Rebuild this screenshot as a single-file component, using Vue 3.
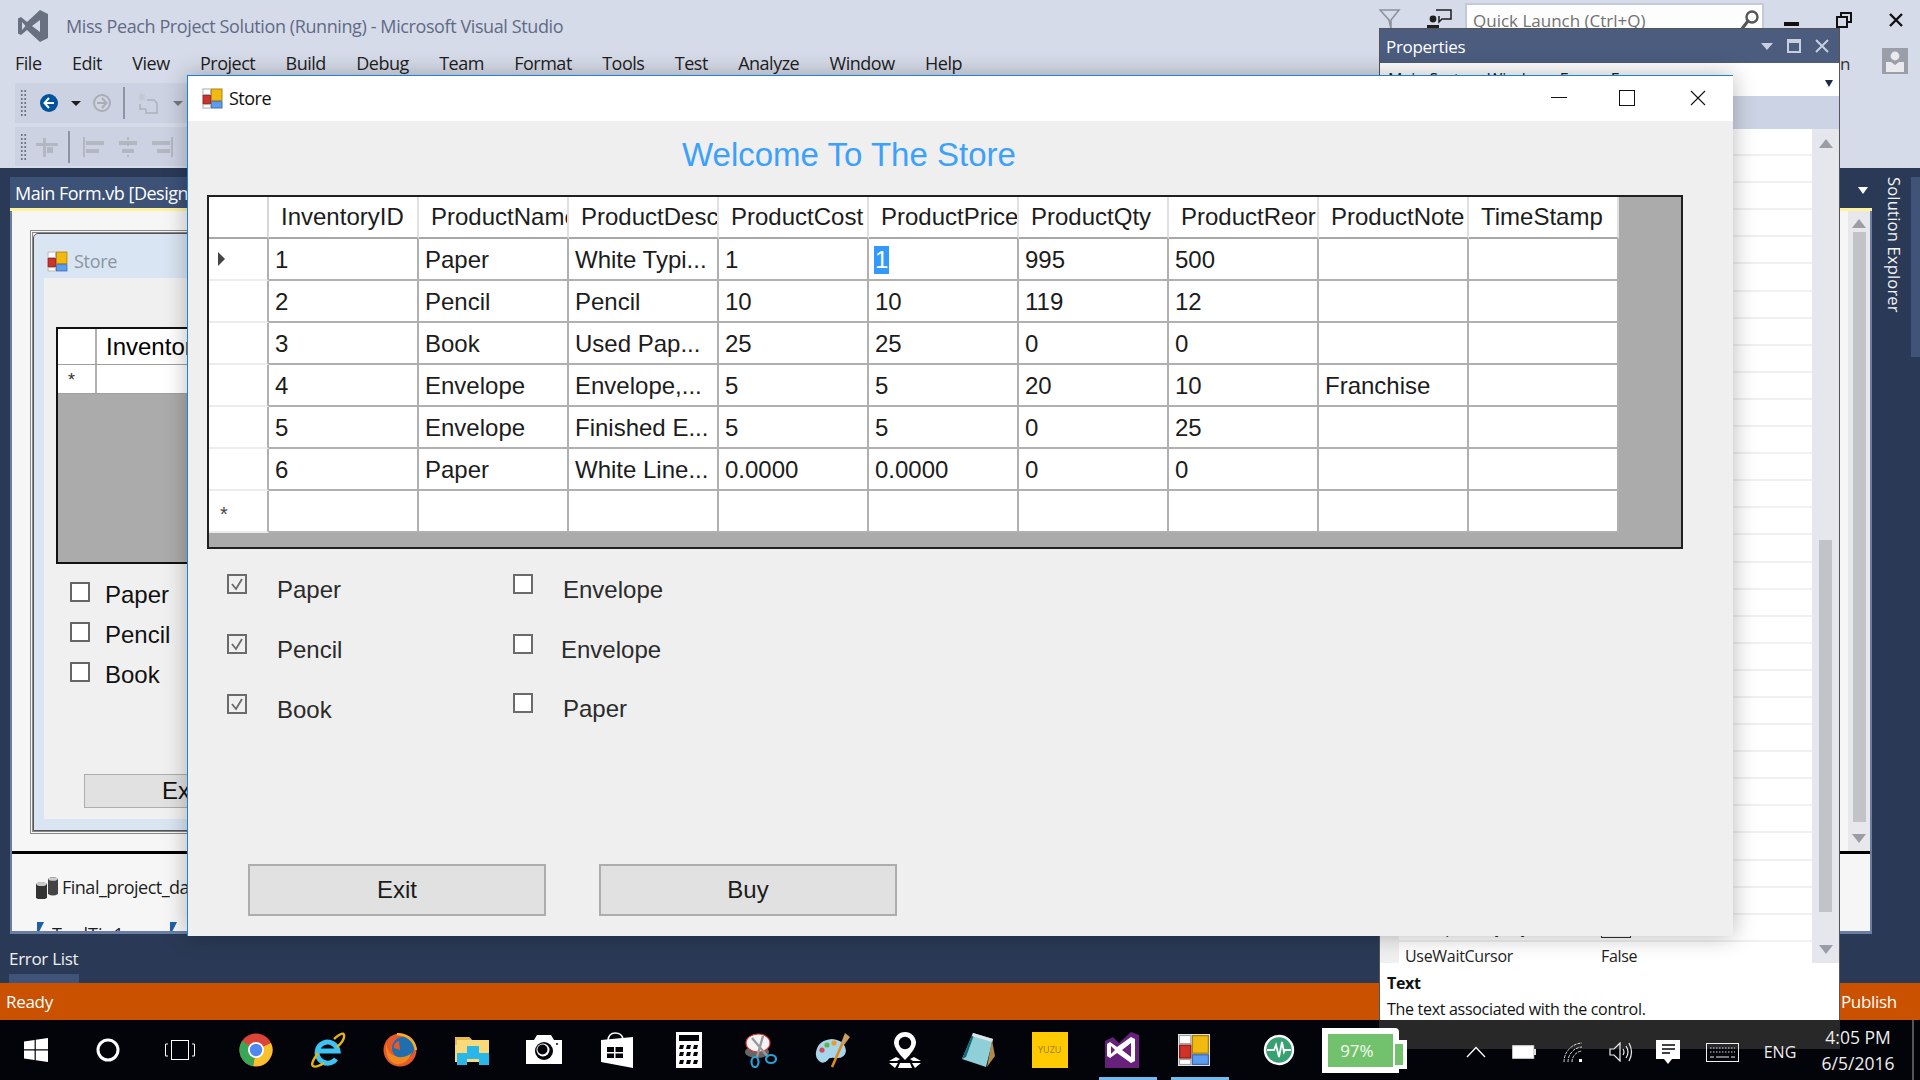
<template>
  <div class="desktop">
    <svg class="defs" width="0" height="0">
      <symbol id="formicon" viewBox="0 0 20 20">
        <rect x="0" y="0" width="20" height="20" fill="#e4e4e4" />
        <rect x="9" y="1" width="10" height="11" fill="#f2b90f" stroke="#a97f10" stroke-width=".8" />
        <rect x="1" y="7" width="7" height="8" fill="#d0322a" stroke="#8a1c18" stroke-width=".8" />
        <rect x="9" y="13" width="10" height="6" fill="#5d9cf0" stroke="#3a6cb4" stroke-width=".8" />
        <rect x="1" y="1" width="7" height="5" fill="#fff" stroke="#999" stroke-width=".6" />
        <rect x="1" y="16" width="7" height="3" fill="#fff" stroke="#999" stroke-width=".6" />
      </symbol>
    </svg>

    <!-- visual studio behind everything -->
    <div class="vs">
      <div class="vs-title">
        <svg class="vs-logo" width="32" height="32" viewBox="0 0 32 32">
          <path fill-rule="evenodd" fill="#68717f" d="M23 0 L31 4 V28 L23 32 L10 20 L4 25 L1 23.5 V8.5 L4 7 L10 12 Z M23 10 L15 16 L23 22 Z M5 12 V20 L8.5 16 Z" />
        </svg>
        <span class="vs-caption">Miss Peach Project Solution (Running) - Microsoft Visual Studio</span>
        <div class="vs-title-right">
          <svg width="22" height="22" viewBox="0 0 22 22" class="filter-ic">
            <path d="M1 2 H20 L12 12 V21 L10 12 Z" fill="none" stroke="#8d93a0" stroke-width="1.6" />
          </svg>
          <svg width="26" height="22" viewBox="0 0 26 22" class="talk-ic">
            <circle cx="6" cy="11" r="3.4" fill="#1e1e1e" />
            <path d="M0 22 V17 H12 V22 Z" fill="#1e1e1e" />
            <path d="M9 2 H24 V11 H15 L12 14 V8" fill="none" stroke="#1e1e1e" stroke-width="1.5" />
          </svg>
          <div class="quick">
            <span>Quick Launch (Ctrl+Q)</span>
            <svg width="22" height="22" viewBox="0 0 22 22">
              <circle cx="14" cy="8" r="5.5" fill="none" stroke="#555" stroke-width="2.4" />
              <path d="M10 12 L3 21" stroke="#555" stroke-width="3" />
            </svg>
          </div>
          <div class="win-min"></div>
          <svg class="win-restore" width="16" height="16" viewBox="0 0 16 16">
            <rect x="5" y="1" width="10" height="9" fill="none" stroke="#111" stroke-width="2" />
            <rect x="1" y="5" width="10" height="10" fill="#d6dbe9" stroke="#111" stroke-width="2" />
          </svg>
          <svg class="win-close" width="16" height="16" viewBox="0 0 16 16">
            <path d="M2 2 L14 14 M14 2 L2 14" stroke="#111" stroke-width="2.4" />
          </svg>
        </div>
      </div>
      <div class="menu-row">
        <div class="menu">
          <span v-for="m in menu" :key="m">{{ m }}</span>
        </div>
        <span class="cut-n">n</span>
        <div class="user-ic">
          <svg width="26" height="26" viewBox="0 0 26 26">
            <rect width="26" height="26" fill="#9a9ea8" />
            <circle cx="13" cy="8" r="4.4" fill="#e9e9ee" />
            <path d="M4 24 V14 H9 L13 17 L17 14 H22 V24 Z" fill="#e9e9ee" />
          </svg>
        </div>
      </div>
      <div class="toolbar tb1">
        <span class="grip"></span>
        <svg width="18" height="18" viewBox="0 0 18 18" class="t-back">
          <circle cx="9" cy="9" r="9" fill="#00539c" />
          <path d="M9 4 L4.5 9 L9 14 M5 9 H14" stroke="#fff" stroke-width="2" fill="none" />
        </svg>
        <span class="tri t-tri1"></span>
        <svg width="18" height="18" viewBox="0 0 18 18" class="t-fwd">
          <circle cx="9" cy="9" r="8" fill="#d0d4e0" stroke="#a9adb5" stroke-width="2" />
          <path d="M9 4 L13.5 9 L9 14 M4 9 H13" stroke="#a9adb5" stroke-width="2" fill="none" />
        </svg>
        <span class="sep t-sep"></span>
        <svg width="20" height="22" viewBox="0 0 20 22" class="t-new">
          <path d="M9 8 H16 L19 11 V21 H8 V17 M2 12 V17 H8" fill="none" stroke="#adb1ba" stroke-width="1.5" />
          <path d="M4 1 V9 M0 5 H8 M1 2 L7 8 M7 2 L1 8" stroke="#c4c7cf" stroke-width="1.2" />
        </svg>
        <span class="tri grey t-tri2"></span>
      </div>
      <div class="toolbar tb2">
        <span class="grip"></span>
        <svg width="22" height="22" viewBox="0 0 22 22" class="t2a">
          <path d="M0 7 H22 V10 H0 Z M7 2 H10 V21 H7 Z" fill="#b3b7c0" />
          <rect x="11" y="11" width="6" height="6" fill="#b3b7c0" />
        </svg>
        <span class="sep t2sep"></span>
        <svg width="22" height="20" viewBox="0 0 22 20" class="t2b">
          <path d="M1 0 V20" stroke="#b3b7c0" stroke-width="2" />
          <rect x="3" y="4" width="18" height="4" fill="#b3b7c0" />
          <rect x="3" y="12" width="13" height="4" fill="#b3b7c0" />
        </svg>
        <svg width="20" height="20" viewBox="0 0 20 20" class="t2c">
          <path d="M10 0 V20" stroke="#b3b7c0" stroke-width="2" stroke-dasharray="3 3" />
          <rect x="1" y="4" width="18" height="4" fill="#b3b7c0" />
          <rect x="4" y="12" width="12" height="4" fill="#b3b7c0" />
        </svg>
        <svg width="22" height="20" viewBox="0 0 22 20" class="t2d">
          <path d="M21 0 V20" stroke="#b3b7c0" stroke-width="2" />
          <rect x="1" y="4" width="18" height="4" fill="#b3b7c0" />
          <rect x="6" y="12" width="13" height="4" fill="#b3b7c0" />
        </svg>
      </div>

      <div class="vs-main">
        <div class="tab-row">
          <div class="tab">Main Form.vb [Design]</div>
          <span class="tri white tab-drop"></span>
        </div>
        <div class="doc">
          <div class="design-row">
            <div class="design">
              <div class="sel-box">
                <div class="d-form">
                  <div class="d-title">
                    <svg width="21" height="21"><use href="#formicon" /></svg>
                    <span>Store</span>
                  </div>
                  <div class="d-body">
                    <div class="d-grid">
                      <div class="d-head">
                        <div class="d-corner"></div>
                        <div class="d-col">InventoryID</div>
                      </div>
                      <div class="d-new">
                        <div class="d-corner small">*</div>
                        <div class="d-col"></div>
                      </div>
                    </div>
                    <div class="d-check" v-for="c in designChecks" :key="c">
                      <span class="d-box"></span>
                      <span>{{ c }}</span>
                    </div>
                    <div class="d-btn">Exit</div>
                  </div>
                </div>
              </div>
            </div>
            <div class="doc-scroll">
              <span class="tri up grey2"></span>
              <div class="doc-thumb"></div>
              <span class="tri grey2"></span>
            </div>
          </div>
          <div class="blackline"></div>
          <div class="tray">
            <div class="tray-item">
              <svg width="24" height="24" viewBox="0 0 24 24">
                <path d="M13 4 Q18 0 23 4 V19 Q18 22 13 19 Z" fill="#444" />
                <path d="M1 9 Q6 5 12 9 V23 Q6 26 1 23 Z" fill="#333" />
                <ellipse cx="6.5" cy="9" rx="5" ry="2" fill="#ccc" />
                <ellipse cx="18" cy="4" rx="4.6" ry="1.8" fill="#ccc" />
              </svg>
              <span>Final_project_dataset</span>
            </div>
            <div class="tray-second">
              <span class="mini-arrow"></span>
              <span class="cut-txt">ToolTip1</span>
              <span class="mini-arrow"></span>
            </div>
          </div>
        </div>
        <div class="error-tab">Error List</div>
        <span class="explorer">Solution Explorer</span>
        <span class="explorer-strip"></span>
      </div>

      <div class="status">
        <span>Ready</span>
        <span>Publish</span>
      </div>

      <div class="taskbar">
        <div class="ghost"></div>
        <div class="cell">
          <svg width="24" height="24" viewBox="0 0 24 24">
            <path d="M0 3.4 L10.6 2 V11.2 H0 Z M11.8 1.8 L24 0 V11.2 H11.8 Z M0 12.6 H10.6 V22 L0 20.6 Z M11.8 12.6 H24 V24 L11.8 22.2 Z" fill="#fff" />
          </svg>
        </div>
        <div class="cell">
          <svg width="24" height="24" viewBox="0 0 24 24">
            <circle cx="12" cy="12" r="10" fill="none" stroke="#fff" stroke-width="3" />
          </svg>
        </div>
        <div class="cell">
          <svg width="30" height="20" viewBox="0 0 30 20">
            <rect x="6.5" y=".5" width="17" height="19" fill="none" stroke="#fff" />
            <path d="M3 4 H.5 V16 H3 M27 4 H29.5 V16 H27" fill="none" stroke="#fff" />
          </svg>
        </div>
        <div class="cell chrome">
          <svg width="34" height="34" viewBox="0 0 34 34">
            <circle cx="17" cy="17" r="16.5" fill="#db4437" />
            <path d="M17 17 L32 10 A16.5 16.5 0 0 1 14 33 Z" fill="#fbc02d" />
            <path d="M17 17 L14 33.2 A16.5 16.5 0 0 1 3 8 Z" fill="#3aa757" />
            <circle cx="17" cy="17" r="8" fill="#fff" />
            <circle cx="17" cy="17" r="6.2" fill="#4f88f0" />
          </svg>
        </div>
        <div class="cell">
          <svg width="36" height="36" viewBox="0 0 36 36">
            <path d="M7 19 H28 A10.5 10.5 0 1 0 26 27" fill="none" stroke="#3fc3f2" stroke-width="5" />
            <path d="M24 7 Q33 -1 34 3 Q35 8 27 15 M8 21 Q0 32 3 34 Q6 36 14 31" fill="none" stroke="#e8b40f" stroke-width="2.4" />
          </svg>
        </div>
        <div class="cell">
          <svg width="34" height="34" viewBox="0 0 34 34">
            <circle cx="17" cy="17" r="16.5" fill="#e8592a" />
            <circle cx="20" cy="15" r="11" fill="#1f6fb0" />
            <path d="M14 1 Q30 2 33 17" fill="none" stroke="#f1b420" stroke-width="2.5" />
            <path d="M3 10 Q4 22 15 24 Q25 25 29 19 Q24 33 13 31 Q2 28 3 10 Z" fill="#f08a1f" />
            <path d="M16 8 Q10 10 11 15 L17 17 Z" fill="#e8592a" />
          </svg>
        </div>
        <div class="cell">
          <svg width="34" height="30" viewBox="0 0 34 30">
            <path d="M0 2 H14 L17 5 H34 V27 H0 Z" fill="#f9d97a" />
            <path d="M0 2 H14 L17 5 H2 V10 H0 Z" fill="#e6bb50" />
            <path d="M2 30 V18 H12 V11 H24 V18 H34 V30 H24 V24 H12 V30 Z" fill="#29b6e8" />
          </svg>
        </div>
        <div class="cell">
          <svg width="36" height="30" viewBox="0 0 36 30">
            <path d="M0 5 H8 L11 0 H25 L28 5 H36 V29 H0 Z" fill="#fff" />
            <circle cx="18" cy="16" r="9" fill="#020409" />
            <circle cx="17" cy="15" r="6.5" fill="#fff" />
            <circle cx="16.5" cy="14.5" r="5" fill="#020409" />
            <circle cx="31" cy="9" r="1" fill="#020409" />
          </svg>
        </div>
        <div class="cell">
          <svg width="32" height="36" viewBox="0 0 32 36">
            <path d="M0 8 L32 5 V36 L0 30 Z" fill="#fff" />
            <path d="M7 8 Q8 1 14 1 Q21 1 22 7" fill="none" stroke="#fff" stroke-width="1.6" />
            <path d="M6 15 H13 V20 H6 Z M14.5 15 H22 V20 H14.5 Z M6 21.5 H13 V26 H6 Z M14.5 21.5 H22 V26 H14.5 Z" fill="#020409" />
          </svg>
        </div>
        <div class="cell">
          <svg width="26" height="36" viewBox="0 0 26 36">
            <rect width="26" height="36" fill="#fff" />
            <rect x="3" y="3" width="20" height="6" fill="#020409" />
            <g fill="#020409">
              <path d="M4 13 H8 L7 17 H3 Z M11 13 H15 L14 17 H10 Z M18 13 H22 L21 17 H17 Z" />
              <path d="M4 20 H8 L7 24 H3 Z M11 20 H15 L14 24 H10 Z M18 20 H22 L21 24 H17 Z" />
              <path d="M4 28 H8 L7 32 H3 Z M11 28 H15 L14 32 H10 Z M18 28 H22 L21 32 H17 Z" />
            </g>
          </svg>
        </div>
        <div class="cell">
          <svg width="34" height="36" viewBox="0 0 34 36">
            <ellipse cx="13" cy="20" rx="12" ry="6" fill="#666" />
            <ellipse cx="14" cy="11" rx="12" ry="9" fill="#f4f4f4" stroke="#d33" stroke-width="1.2" />
            <path d="M8 6 L24 25 M19 4 L13 25" stroke="#999" stroke-width="2.4" />
            <ellipse cx="11" cy="30" rx="3.5" ry="5" fill="none" stroke="#2a9fd8" stroke-width="2.2" />
            <ellipse cx="27" cy="27" rx="5" ry="4" fill="none" stroke="#2a9fd8" stroke-width="2.2" />
          </svg>
        </div>
        <div class="cell">
          <svg width="36" height="36" viewBox="0 0 36 36">
            <path d="M1 20 Q3 8 17 7 Q30 8 31 19 Q30 27 20 26 Q14 25 13 28 Q8 33 4 29 Q0 25 1 20 Z" fill="#a7d5ea" />
            <circle cx="7" cy="18" r="2.6" fill="#d04a5a" />
            <circle cx="12" cy="13" r="2.6" fill="#61b446" />
            <circle cx="19" cy="11" r="2.6" fill="#ee9b2c" />
            <path d="M17 35 L28 10" stroke="#e08a1e" stroke-width="2.6" />
            <path d="M26 11 L30 1 L35 5 L29 13 Z" fill="#c9a060" />
          </svg>
        </div>
        <div class="cell">
          <svg width="32" height="36" viewBox="0 0 32 36">
            <path d="M16 0 A11 11 0 0 1 27 11 Q27 17 16 28 Q5 17 5 11 A11 11 0 0 1 16 0 Z" fill="#fff" />
            <circle cx="16" cy="11" r="6.2" fill="#020409" />
            <path d="M7 25 L0 29 H8 L11 27 Z M25 25 L32 29 H24 L21 27 Z M0 31 H9 L6 36 Z M32 31 H23 L26 36 Z M11 31 H21 L23 36 H9 Z" fill="#fff" />
          </svg>
        </div>
        <div class="cell">
          <svg width="34" height="36" viewBox="0 0 34 36">
            <path d="M12 1 L32 7 L25 35 L1 27 Z" fill="#8fd0d8" />
            <path d="M1 27 L11 3 L13 3 L5 25 Z" fill="#0f6b7a" />
            <path d="M12 1 L32 7 L31 10 L11 4 Z" fill="#dfe5e6" />
            <path d="M31 8 L34 24 L26 35 Z" fill="#b08a4c" />
          </svg>
        </div>
        <div class="cell">
          <div class="yuzu">YUZU</div>
        </div>
        <div class="cell active">
          <svg width="34" height="36" viewBox="0 0 34 36">
            <path d="M0 9 L8 5 L14 11 L26 0 L34 3 V36 H0 Z" fill="#68217a" />
            <path fill-rule="evenodd" fill="#fff" d="M26 5 L30 7 V29 L26 31 L12 21 L5 26 L2 24 V12 L5 10 L12 15 Z M26 11 L17 18 L26 25 Z M6 14 V22 L10 18 Z" />
          </svg>
        </div>
        <div class="cell active">
          <svg width="32" height="32"><use href="#formicon" /></svg>
        </div>
        <div class="cell health">
          <svg width="32" height="32" viewBox="0 0 32 32">
            <circle cx="16" cy="16" r="14" fill="#37a172" stroke="#fff" stroke-width="2.4" />
            <path d="M4 16 H11 L13 11 L16 23 L19 8 L21 18 L22 16 H28" fill="none" stroke="#fff" stroke-width="1.8" />
          </svg>
        </div>
        <div class="batt">
          <div class="batt-fill">97%</div>
          <div class="batt-nub"></div>
        </div>

        <div class="tray-icons">
          <div class="t-item w48">
            <svg width="20" height="12" viewBox="0 0 20 12"><path d="M1 11 L10 1.5 L19 11" fill="none" stroke="#fff" stroke-width="1.3" /></svg>
          </div>
          <div class="t-item w48">
            <svg width="24" height="14" viewBox="0 0 24 14">
              <rect x=".7" y=".7" width="21" height="12.6" fill="#fff" stroke="#ddd" />
              <rect x="22" y="4" width="2" height="6" fill="#ddd" />
            </svg>
          </div>
          <div class="t-item w50">
            <svg width="20" height="20" viewBox="0 0 20 20">
              <path d="M1 20 A19 19 0 0 1 19 1 M5 20 A15 15 0 0 1 19 5 M9 20 A11 11 0 0 1 19 9" fill="none" stroke="#ddd" stroke-width="1" stroke-dasharray="3 1" />
              <rect x="16" y="17" width="3" height="3" fill="#fff" />
            </svg>
          </div>
          <div class="t-item w46">
            <svg width="24" height="20" viewBox="0 0 24 20">
              <path d="M1 7 H5 L11 1 V19 L5 13 H1 Z" fill="none" stroke="#eee" stroke-width="1.2" />
              <path d="M14 7 Q16 10 14 13 M17 4 Q21 10 17 16 M20 1 Q25 10 20 19" fill="none" stroke="#eee" stroke-width="1.2" />
            </svg>
          </div>
          <div class="t-item w48">
            <svg width="24" height="25" viewBox="0 0 24 25">
              <path d="M0 0 H24 V19 H16 L12 24 L8 19 H0 Z" fill="#fff" />
              <path d="M6 5 H19 M6 9 H19 M6 13 H14" stroke="#020409" stroke-width="1.3" />
            </svg>
          </div>
          <div class="t-item w60">
            <svg width="33" height="19" viewBox="0 0 33 19">
              <rect x=".5" y=".5" width="32" height="18" fill="none" stroke="#eee" />
              <path d="M4 5 H29 M4 9 H29" stroke="#ddd" stroke-dasharray="1.5 1.5" />
              <path d="M4 14 H8 M10 14 H23 M25 14 H29" stroke="#eee" />
            </svg>
          </div>
          <div class="t-item eng">ENG</div>
          <div class="clock">
            <span>4:05 PM</span>
            <span>6/5/2016</span>
          </div>
        </div>
        <div class="edge"></div>
      </div>
    </div>

    <!-- floating properties panel -->
    <div class="props">
      <div class="props-head">
        <span>Properties</span>
        <div class="props-ctrl">
          <span class="tri pale"></span>
          <svg width="14" height="14" viewBox="0 0 14 14"><rect x="1" y="1" width="12" height="12" fill="none" stroke="#c8cfdf" stroke-width="2" /><rect x="1" y="1" width="12" height="3" fill="#c8cfdf" /></svg>
          <svg width="14" height="14" viewBox="0 0 14 14"><path d="M1 1 L13 13 M13 1 L1 13" stroke="#c8cfdf" stroke-width="2" /></svg>
        </div>
      </div>
      <div class="props-select">
        <span>Main System.Windows.Forms.Form</span>
        <span class="tri dark"></span>
      </div>
      <div class="props-band"></div>
      <div class="props-grid">
        <div class="props-rows">
          <div class="p-row" v-for="n in 29" :key="n"></div>
          <div class="p-row">
            <span class="p-name">TransparencyKey</span>
            <span class="p-val"><i class="swatch"></i></span>
          </div>
          <div class="p-row last">
            <span class="p-name">UseWaitCursor</span>
            <span class="p-val">False</span>
          </div>
        </div>
        <div class="props-scroll">
          <span class="tri up grey2"></span>
          <div class="props-thumb"></div>
          <span class="tri grey2"></span>
        </div>
      </div>
      <div class="props-desc">
        <b>Text</b>
        <span>The text associated with the control.</span>
      </div>
    </div>

    <!-- the running form -->
    <div class="store">
      <div class="store-title">
        <svg width="21" height="21"><use href="#formicon" /></svg>
        <span class="store-name">Store</span>
        <div class="store-ctrl">
          <span class="s-min"></span>
          <span class="s-max"></span>
          <svg width="16" height="16" viewBox="0 0 16 16"><path d="M1 1 L15 15 M15 1 L1 15" stroke="#111" stroke-width="1.1" /></svg>
        </div>
      </div>
      <div class="store-body">
        <h1 class="welcome">Welcome To The Store</h1>
        <div class="grid">
          <div class="g-row g-head">
            <div class="g-rh"></div>
            <div class="g-hc" v-for="h in headers" :key="h"><span>{{ h }}</span></div>
          </div>
          <div class="g-row" v-for="(row, i) in rows" :key="i">
            <div class="g-rh">
              <span v-if="i === 0" class="cur-arrow"></span>
            </div>
            <div class="g-c" v-for="(c, j) in row" :key="j">
              <span :class="{ picked: i === 0 && j === 4 }">{{ c }}</span>
            </div>
          </div>
          <div class="g-row">
            <div class="g-rh star">*</div>
            <div class="g-c" v-for="h in headers" :key="h"></div>
          </div>
        </div>
        <div class="checks">
          <div class="check" v-for="c in checks" :key="c.label + c.on" :class="c.cls">
            <span class="box" :class="{ on: c.on }">
              <svg v-if="c.on" width="16" height="15" viewBox="0 0 16 15">
                <path d="M3 7 L7 12 L13 2" fill="none" stroke="#6a6a6a" stroke-width="1.8" />
              </svg>
            </span>
            <span class="check-label">{{ c.label }}</span>
          </div>
        </div>
        <div class="buttons">
          <button type="button">Exit</button>
          <button type="button">Buy</button>
        </div>
      </div>
    </div>
  </div>
</template>

<script setup>
const menu = ['File', 'Edit', 'View', 'Project', 'Build', 'Debug', 'Team', 'Format', 'Tools', 'Test', 'Analyze', 'Window', 'Help']

const designChecks = ['Paper', 'Pencil', 'Book']

const headers = ['InventoryID', 'ProductName', 'ProductDesc', 'ProductCost', 'ProductPrice', 'ProductQty', 'ProductReor', 'ProductNote', 'TimeStamp']

const rows = [
  ['1', 'Paper', 'White Typi...', '1', '1', '995', '500', '', ''],
  ['2', 'Pencil', 'Pencil', '10', '10', '119', '12', '', ''],
  ['3', 'Book', 'Used Pap...', '25', '25', '0', '0', '', ''],
  ['4', 'Envelope', 'Envelope,...', '5', '5', '20', '10', 'Franchise', ''],
  ['5', 'Envelope', 'Finished E...', '5', '5', '0', '25', '', ''],
  ['6', 'Paper', 'White Line...', '0.0000', '0.0000', '0', '0', '', '']
]

const checks = [
  { label: 'Paper', on: true },
  { label: 'Envelope', on: false },
  { label: 'Pencil', on: true },
  { label: 'Envelope', on: false, cls: 'nudge' },
  { label: 'Book', on: true },
  { label: 'Paper', on: false, cls: 'lift' }
]
</script>

<style>
html, body {
  margin: 0;
  background: #000;
}
</style>

<style scoped>
.desktop {
  position: relative;
  width: 1920px;
  height: 1080px;
  overflow: hidden;
  font-family: "Open Sans", "Noto Sans", sans-serif;
}
.defs {
  position: absolute;
}

/* visual studio */
.vs {
  width: 1920px;
  height: 1080px;
  display: flex;
  flex-direction: column;
  background: #d6dbe9;
}
.vs-title {
  height: 50px;
  display: flex;
  align-items: flex-start;
  flex-shrink: 0;
}
.vs-logo {
  margin: 10px 0 0 17px;
}
.vs-caption {
  margin: 14px 0 0 17px;
  font-size: 18px;
  line-height: 24px;
  color: #5f6b86;
  letter-spacing: -0.4px;
}
.vs-title-right {
  margin-left: auto;
  display: flex;
  align-items: flex-start;
}
.filter-ic {
  margin: 8px 26px 0 0;
}
.talk-ic {
  margin: 8px 12px 0 0;
}
.quick {
  width: 299px;
  height: 28px;
  box-sizing: border-box;
  margin-top: 3px;
  background: #fdfdfe;
  border: 2px solid #c4c9d8;
  border-bottom: none;
  display: flex;
  justify-content: space-between;
  padding: 4px 2px 0 6px;
  font-size: 17px;
  color: #717171;
}
.win-min {
  width: 15px;
  height: 4px;
  background: #111;
  margin: 22px 0 0 20px;
}
.win-restore {
  margin: 12px 0 0 37px;
}
.win-close {
  margin: 12px 16px 0 36px;
}

.menu-row {
  height: 32px;
  display: flex;
  flex-shrink: 0;
}
.menu {
  margin-left: 15px;
  display: flex;
  gap: 30.4px;
  font-size: 18px;
  line-height: 27px;
  color: #1e1e1e;
  letter-spacing: -0.5px;
}
.cut-n {
  position: absolute;
  left: 1840px;
  top: 52px;
  font-size: 17px;
  color: #333;
}
.user-ic {
  position: absolute;
  left: 1882px;
  top: 48px;
}

.toolbar {
  margin-left: 15px;
  width: 1400px;
  height: 39px;
  background: #ccd2e2;
  display: flex;
  align-items: center;
  flex-shrink: 0;
}
.tb1 {
  height: 40px;
  margin-top: 1px;
  margin-bottom: 4px;
}
.tb2 {
  margin-bottom: 2px;
}
.grip {
  width: 7px;
  height: 28px;
  margin-left: 5px;
  background: radial-gradient(circle, #717682 1px, transparent 1.3px) 0 0 / 3.5px 4px;
}
.t-back { margin-left: 13px; }
.tri {
  display: inline-block;
  width: 0;
  height: 0;
  border-left: 5px solid transparent;
  border-right: 5px solid transparent;
  border-top: 5px solid #1e1e1e;
}
.tri.up {
  border-top: none;
  border-bottom: 9px solid #9a9da6;
}
.tri.grey { border-top-color: #777; }
.tri.grey2 {
  border-left-width: 7px;
  border-right-width: 7px;
}
.tri.grey2:not(.up) {
  border-top: 9px solid #9a9da6;
}
.tri.white { border-top-color: #fff; border-top-width: 7px; }
.tri.pale { border-top-color: #c8cfdf; border-top-width: 7px; border-left-width: 6px; border-right-width: 6px; }
.tri.dark { border-top-color: #1e2a40; border-top-width: 7px; border-left-width: 4px; border-right-width: 4px; }
.t-tri1 { margin-left: 13px; }
.t-fwd { margin-left: 12px; }
.sep {
  width: 2px;
  background: #8d94a6;
}
.t-sep { height: 32px; margin-left: 12px; }
.t-new { margin-left: 13px; }
.t-tri2 { margin-left: 15px; }
.t2a { margin-left: 9px; }
.t2sep { height: 32px; margin-left: 10px; }
.t2b { margin-left: 13px; }
.t2c { margin-left: 13px; }
.t2d { margin-left: 13px; }

.vs-main {
  position: relative;
  height: 815px;
  flex-shrink: 0;
  background: #2a3a56;
  display: flex;
  flex-direction: column;
}
.tab-row {
  width: 1862px;
  height: 43px;
  box-sizing: border-box;
  margin: 0 0 0 10px;
  padding-top: 9px;
  border-bottom: 3px solid #fff29d;
  display: flex;
  justify-content: space-between;
  align-items: flex-start;
  flex-shrink: 0;
}
.tab {
  width: 300px;
  height: 31px;
  background: #3d5277;
  color: #fff;
  font-size: 18px;
  line-height: 32px;
  padding-left: 5px;
  letter-spacing: -0.5px;
}
.tab-drop { margin: 10px 4px 0 0; }
.doc {
  width: 1862px;
  height: 723px;
  box-sizing: border-box;
  margin-left: 10px;
  border: 1px solid #6a7ea3;
  border-top: none;
  border-width: 0 2px 3px;
  background: #f6f6f6;
  display: flex;
  flex-direction: column;
  flex-shrink: 0;
}
.design-row {
  height: 640px;
  display: flex;
}
.design {
  flex: 1;
  background: #f6f6f6;
  padding: 19px 0 0 18px;
  box-sizing: border-box;
  overflow: hidden;
}
.sel-box {
  width: 1000px;
  height: 604px;
  box-sizing: border-box;
  border: 3px double #888;
  padding: 0;
}
.d-form {
  height: 100%;
  box-sizing: border-box;
  border: 1px solid #555;
  border-radius: 5px 5px 0 0;
  background: #d9e5f2;
  padding: 0 0 11px 10px;
  display: flex;
  flex-direction: column;
}
.d-title {
  height: 44px;
  box-sizing: border-box;
  padding-top: 10px;
  margin-left: 3px;
  display: flex;
  align-items: center;
  gap: 6px;
  font-size: 18px;
  letter-spacing: -0.3px;
  color: #8a94a0;
  flex-shrink: 0;
}
.d-body {
  flex: 1;
  background: #f0f0f0;
  padding: 49px 0 0 12px;
}
.d-grid {
  width: 800px;
  height: 237px;
  box-sizing: border-box;
  border: 2px solid #111;
  background: #ababab;
}
.d-head, .d-new {
  display: flex;
  background: #fff;
  height: 35px;
  font-family: "Liberation Sans", Arial, sans-serif;
  font-size: 24px;
  line-height: 35px;
  border-bottom: 1px solid #a0a0a0;
}
.d-new {
  height: 28px;
  line-height: 31px;
}
.d-corner {
  width: 39px;
  box-sizing: border-box;
  border-right: 2px solid #b0b0b0;
}
.d-corner.small {
  font-size: 18px;
  padding-left: 10px;
  color: #333;
}
.d-col {
  padding-left: 9px;
}
.d-check {
  margin: 0 0 0 14px;
  height: 40px;
  display: flex;
  align-items: center;
  gap: 15px;
  font-family: "Liberation Sans", Arial, sans-serif;
  font-size: 24px;
  color: #111;
}
.d-grid + .d-check { margin-top: 11px; }
.d-box {
  width: 20px;
  height: 20px;
  box-sizing: border-box;
  background: #fff;
  border: 2px solid #666;
  margin-top: -6px;
}
.d-btn {
  width: 300px;
  height: 34px;
  box-sizing: border-box;
  margin: 79px 0 0 28px;
  background: #e1e1e1;
  border: 1px solid #adadad;
  font-family: "Liberation Sans", Arial, sans-serif;
  font-size: 24px;
  color: #111;
  line-height: 32px;
  padding-left: 77px;
}
.doc-scroll {
  width: 22px;
  background: #e8e8ec;
  display: flex;
  flex-direction: column;
  align-items: center;
  padding-top: 8px;
  box-sizing: border-box;
}
.doc-thumb {
  width: 13px;
  height: 590px;
  margin: 4px 0 12px;
  background: #c2c3c9;
}
.blackline {
  height: 3px;
  background: #000;
  flex-shrink: 0;
}
.tray {
  flex: 1;
  overflow: hidden;
  padding: 21px 0 0 23px;
  font-size: 18px;
  color: #1e1e1e;
}
.tray-item {
  display: flex;
  align-items: center;
  gap: 3px;
  letter-spacing: -0.5px;
}
.tray-second {
  display: flex;
  gap: 8px;
  margin: 23px 0 0 2px;
}
.mini-arrow {
  width: 0;
  height: 0;
  border-left: 7px solid #1f5fa8;
  border-bottom: 14px solid transparent;
}
.cut-txt { width: 110px; }

.error-tab {
  width: 70px;
  margin: 15px 0 0 9px;
  height: 34px;
  box-sizing: border-box;
  color: #f0f0f0;
  font-size: 17px;
  line-height: 20px;
  letter-spacing: -0.3px;
  white-space: nowrap;
  background: linear-gradient(#2a3a56 25px, #3f5478 25px);
}
.explorer {
  position: absolute;
  left: 1883px;
  top: 9px;
  writing-mode: vertical-rl;
  color: #f4f4f4;
  font-size: 16.5px;
  letter-spacing: .2px;
}
.explorer-strip {
  position: absolute;
  left: 1911px;
  top: 9px;
  width: 9px;
  height: 180px;
  background: #3f5478;
}

.status {
  height: 37px;
  flex-shrink: 0;
  background: #ca5100;
  color: #fff;
  display: flex;
  justify-content: space-between;
  align-items: center;
  padding: 0 23px 0 6px;
  font-size: 17px;
  letter-spacing: -0.3px;
}

/* windows taskbar */
.taskbar {
  position: relative;
  flex: 1;
  background: #02040a;
  display: flex;
  align-items: center;
}
.ghost {
  position: absolute;
  left: 1379px;
  top: 0;
  width: 461px;
  height: 29px;
  background: #282828;
}
.cell {
  position: relative;
  width: 72.2px;
  height: 60px;
  display: flex;
  align-items: center;
  justify-content: center;
  flex-shrink: 0;
}
.cell.chrome {
  margin-left: 3px;
}
.cell.active::after {
  content: "";
  position: absolute;
  left: 13px;
  right: 1px;
  bottom: 0;
  height: 3px;
  background: #76b9ed;
}
.cell.health {
  margin-left: 13px;
}
.yuzu {
  width: 36px;
  height: 36px;
  background: #ffcb00;
  color: #9a7a10;
  font-size: 9px;
  text-align: center;
  line-height: 36px;
}
.batt {
  position: relative;
  width: 77px;
  height: 45px;
  box-sizing: border-box;
  margin-left: 7px;
  border: 6px solid #fff;
  background: #fff;
  border-radius: 0 4px 0 0;
}
.batt-fill {
  width: 100%;
  height: 100%;
  background: #72c16d;
  color: #f2fff0;
  font-size: 17px;
  text-align: center;
  line-height: 33px;
  padding-right: 8px;
  box-sizing: border-box;
}
.batt-nub {
  position: absolute;
  right: -14px;
  top: 6px;
  width: 8px;
  height: 21px;
  background: #72c16d;
  border: 4px solid #fff;
  border-left: none;
}
.tray-icons {
  position: relative;
  margin-left: auto;
  margin-right: 12px;
  display: flex;
  align-items: center;
  color: #eee;
}
.t-item {
  display: flex;
  justify-content: center;
  align-items: center;
  margin-top: 4px;
}
.w48 { width: 48px; }
.w50 { width: 50px; }
.w46 { width: 46px; }
.w60 { width: 60px; }
.eng {
  width: 56px;
  font-size: 16px;
}
.clock {
  width: 100px;
  display: flex;
  flex-direction: column;
  align-items: center;
  font-size: 17.5px;
  line-height: 26px;
}
.edge {
  position: absolute;
  right: 6px;
  top: 0;
  width: 2px;
  height: 60px;
  background: #555;
}

/* properties */
.props {
  position: absolute;
  left: 1379px;
  top: 28px;
  width: 461px;
  height: 992px;
  box-sizing: border-box;
  border: 1px solid #555;
  border-bottom: none;
  background: #fff;
  display: flex;
  flex-direction: column;
}
.props-head {
  height: 34px;
  flex-shrink: 0;
  background: #4b5c7e;
  color: #fff;
  display: flex;
  justify-content: space-between;
  align-items: center;
  padding: 0 10px 0 6px;
  font-size: 17px;
  letter-spacing: -0.3px;
}
.props-ctrl {
  display: flex;
  align-items: center;
  gap: 14px;
}
.props-select {
  height: 33px;
  box-sizing: border-box;
  flex-shrink: 0;
  display: flex;
  justify-content: space-between;
  font-size: 16px;
  line-height: 20px;
  padding: 6px 6px 0 8px;
  color: #222;
}
.props-select .tri { margin-top: 11px; }
.props-band {
  height: 33px;
  flex-shrink: 0;
  background: #ccd3e4;
}
.props-grid {
  height: 834px;
  flex-shrink: 0;
  display: flex;
  overflow: hidden;
}
.props-rows {
  flex: 1;
  background: linear-gradient(90deg, #f0f0f0 19px, #fff 19px);
}
.p-row {
  height: 27.1px;
  box-sizing: border-box;
  border-bottom: 2px solid #f0f0f0;
  display: flex;
  align-items: center;
  font-size: 16px;
  color: #1e1e1e;
  padding-left: 25px;
  letter-spacing: -0.3px;
  white-space: nowrap;
}
.p-row.last { border-bottom: none; height: 22px; padding-top: 6px; }
.p-name {
  width: 196px;
}
.p-val {
  display: flex;
  align-items: center;
}
.swatch {
  width: 30px;
  height: 14px;
  margin-top: 8px;
  box-sizing: border-box;
  border: 1px solid #333;
  background: #fff;
}
.props-scroll {
  width: 27px;
  flex-shrink: 0;
  background: #e6e7ed;
  display: flex;
  flex-direction: column;
  align-items: center;
  padding-top: 10px;
  box-sizing: border-box;
}
.props-thumb {
  width: 13px;
  height: 372px;
  margin: 392px 0 33px;
  background: #c2c3c9;
}
.props-desc {
  flex: 1;
  display: flex;
  flex-direction: column;
  gap: 5px;
  padding: 10px 0 0 7px;
  font-size: 16px;
  line-height: 21px;
  color: #111;
  letter-spacing: -0.3px;
}

/* store form */
.store {
  position: absolute;
  left: 187px;
  top: 75px;
  width: 1546px;
  height: 861px;
  box-sizing: border-box;
  border-top: 1px solid #1883d7;
  border-left: 1px solid #1883d7;
  background: #efefef;
  box-shadow: 0 0 22px rgba(0, 0, 0, 0.28);
}
.store-title {
  height: 45px;
  background: #fff;
  display: flex;
  align-items: center;
  padding-left: 14px;
}
.store-name {
  margin: -1px 0 0 6px;
  font-size: 18px;
  color: #111;
  letter-spacing: -0.5px;
}
.store-ctrl {
  margin-left: auto;
  margin-top: -2px;
  display: flex;
  align-items: center;
  padding-right: 27px;
}
.s-min {
  width: 16px;
  height: 1px;
  background: #111;
  margin-right: 52px;
}
.s-max {
  width: 14px;
  height: 14px;
  border: 1px solid #111;
  margin-right: 55px;
}
.store-body {
  padding: 0 0 0 19px;
  font-family: "Liberation Sans", Arial, sans-serif;
}
.welcome {
  margin: 0 0 20px 475px;
  padding-top: 14px;
  font-size: 33px;
  line-height: 40px;
  font-weight: 400;
  color: #3ba1fb;
}
.grid {
  width: 1476px;
  height: 354px;
  box-sizing: border-box;
  border: 2px solid #202020;
  background: #ababab;
  font-size: 24px;
  color: #1c1c1c;
}
.g-row {
  display: flex;
  height: 42px;
}
.g-rh {
  width: 60px;
  flex-shrink: 0;
  box-sizing: border-box;
  background: #fff;
  border-right: 2px solid #b0b0b0;
  border-bottom: 2px solid #ececec;
  display: flex;
  align-items: center;
  padding-left: 9px;
}
.g-head .g-rh {
  border-bottom: 2px solid #a8a8a8;
  border-right-color: #d8d8d8;
}
.star {
  font-size: 20px;
  padding: 6px 0 0 11px;
  color: #444;
}
.cur-arrow {
  width: 0;
  height: 0;
  border-left: 7px solid #444;
  border-top: 7px solid transparent;
  border-bottom: 7px solid transparent;
}
.g-hc, .g-c {
  width: 150px;
  flex-shrink: 0;
  box-sizing: border-box;
  background: #fff;
  white-space: nowrap;
}
.g-hc {
  border-right: 2px solid #e0e0e0;
  border-bottom: 2px solid #a8a8a8;
  padding-left: 12px;
  line-height: 39px;
}
.g-hc span {
  display: block;
  overflow: hidden;
}
.g-c {
  border-right: 2px solid #b0b0b0;
  border-bottom: 2px solid #b0b0b0;
  padding-left: 6px;
  line-height: 41px;
}
.picked {
  display: inline-block;
  background: #3399ff;
  color: #fff;
  line-height: 28px;
  padding: 0 1px;
  margin-left: -1px;
}
.checks {
  width: 600px;
  margin: 25px 0 0 20px;
  display: grid;
  grid-template-columns: 286px 286px;
  grid-auto-rows: 60px;
}
.check {
  display: flex;
  align-items: flex-start;
  color: #2b2b2b;
  font-size: 24px;
}
.check.nudge .check-label {
  margin-left: 28px;
}
.check.lift {
  margin-top: -1px;
}
.box {
  width: 20px;
  height: 20px;
  flex-shrink: 0;
  box-sizing: border-box;
  border: 2px solid #6b6b6b;
  background: #fff;
  display: flex;
  align-items: center;
  justify-content: center;
}
.box.on {
  background: #f0f0f0;
}
.check-label {
  margin-left: 30px;
  line-height: 32px;
}
.buttons {
  margin: 110px 0 0 41px;
  display: flex;
  gap: 53px;
}
.buttons button {
  width: 298px;
  height: 52px;
  background: #e1e1e1;
  border: 2px solid #adadad;
  font-family: "Liberation Sans", Arial, sans-serif;
  font-size: 24px;
  color: #1c1c1c;
  padding: 0;
}
</style>
